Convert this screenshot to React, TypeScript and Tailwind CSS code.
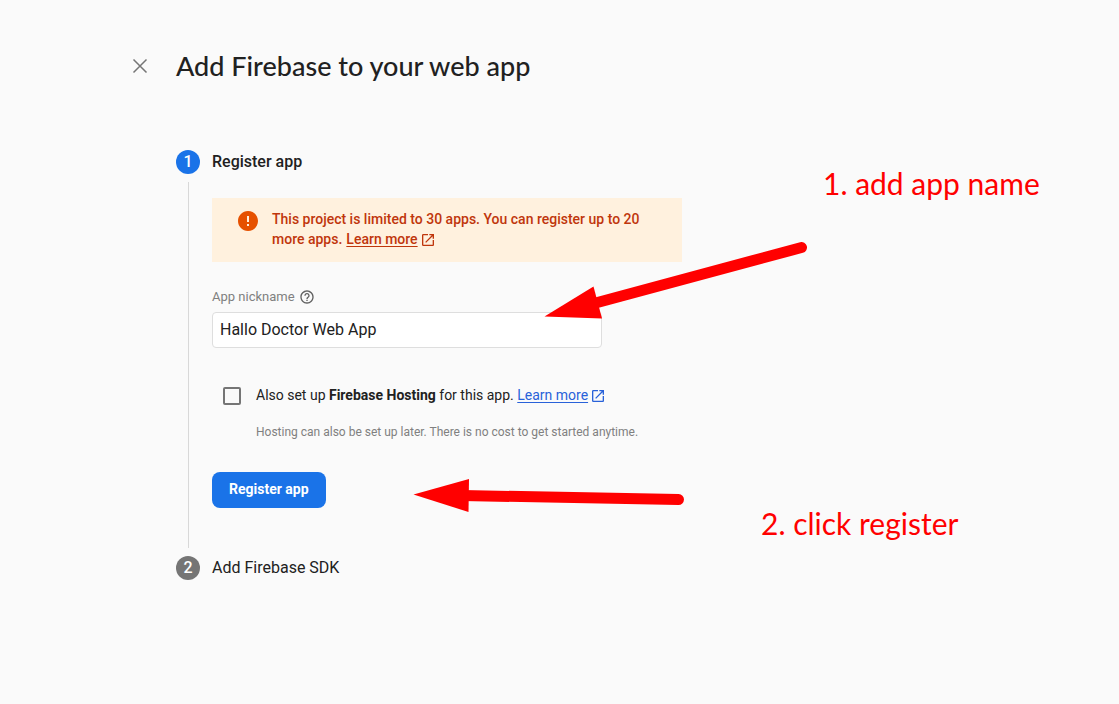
import { useState } from "react";
import type { ReactNode } from "react";

function OpenInNew() {
  return (
    <svg viewBox="0 0 24 24" aria-hidden="true" className="ml-0.5 inline-block size-4 align-[-4px]" fill="currentColor">
      <path d="M19 19H5V5h7V3H5a2 2 0 0 0-2 2v14a2 2 0 0 0 2 2h14c1.1 0 2-.9 2-2v-7h-2v7zM14 3v2h3.59l-9.83 9.83 1.41 1.41L19 6.41V10h2V3h-7z" />
    </svg>
  );
}

function LearnMore({ className }: { className: string }) {
  return (
    <a href="#learn-more" className={className}>
      <span className="underline underline-offset-2">Learn more</span>
      <OpenInNew />
    </a>
  );
}

function StepBadge({ value, className }: { value: number; className: string }) {
  return (
    <span className={`flex size-6 shrink-0 items-center justify-center rounded-full text-base font-medium text-white ${className}`}>
      {value}
    </span>
  );
}

function Notice({ children }: { children: ReactNode }) {
  return (
    <div role="status" className="flex max-w-[470px] gap-3 bg-[#fff1de] px-6 pt-[11px] pb-[13px] text-sm leading-5 font-medium text-[#bf360c]">
      <svg viewBox="0 0 24 24" aria-hidden="true" className="size-6 shrink-0" fill="#e65100">
        <path d="M12 2C6.48 2 2 6.48 2 12s4.48 10 10 10 10-4.48 10-10S17.52 2 12 2zm1 15h-2v-2h2v2zm0-4h-2V7h2v6z" />
      </svg>
      <div>{children}</div>
    </div>
  );
}

function Annotations() {
  return (
    <div className="pointer-events-none absolute top-0 left-0 h-[704px] w-[1119px] font-[Lato,sans-serif] text-[30px] leading-9 text-[#ff0000]">
      <svg viewBox="0 0 1119 704" className="size-full" aria-hidden="true" fill="#ff0000" stroke="#ff0000">
        <path d="M590 304.500 801.500 247.500" strokeWidth="11" strokeLinecap="round" />
        <path d="M544.500 316.500 593.500 286.500 602 318.500Z" stroke="none" />
        <path d="M462 495.500 678.500 499.500" strokeWidth="11" strokeLinecap="round" />
        <path d="M413.500 494.500 469 479 468.500 512Z" stroke="none" />
      </svg>
      <p className="absolute top-[165px] left-[823px] whitespace-nowrap">1. add app name</p>
      <p className="absolute top-[505px] left-[761px] whitespace-nowrap">2. click register</p>
    </div>
  );
}

export default function App() {
  const [nickname, setNickname] = useState("Hallo Doctor Web App");
  const [hosting, setHosting] = useState(false);

  return (
    <main className="relative min-h-screen bg-[#fafafa] px-32 pt-12 font-[Roboto,sans-serif] text-[#212121]">
      <header className="flex items-center gap-6">
        <button type="button" aria-label="Close" className="flex size-6 items-center justify-center">
          <svg viewBox="0 0 24 24" className="size-6" fill="none" stroke="#757575" strokeWidth="1.500">
            <path d="M5.500 5.500 18.500 18.500M18.500 5.500 5.500 18.500" />
          </svg>
        </button>
        <h1 className="font-[Lato,sans-serif] text-[27px] leading-9 font-medium">Add Firebase to your web app</h1>
      </header>

      <ol className="mt-16 pt-0.5 pl-12">
        <li className="flex gap-3">
          <div className="flex flex-col items-center gap-2 pb-2">
            <StepBadge value={1} className="bg-[#1a73e8]" />
            <div className="w-px grow bg-[#d8d8d8]" />
          </div>
          <div className="grow pb-12">
            <h2 className="text-base leading-6 font-medium">Register app</h2>
            <form className="mt-6" onSubmit={(e) => e.preventDefault()}>
              <Notice>
                <p>This project is limited to 30 apps. You can register up to 20</p>
                <p className="flex flex-wrap gap-x-1">
                  <span>more apps.</span>
                  <LearnMore className="whitespace-nowrap" />
                </p>
              </Notice>

              <div className="mt-[23px] flex items-center gap-1 text-[13px] leading-6 text-[#808080]">
                <label htmlFor="nickname">App nickname</label>
                <svg viewBox="0 0 24 24" aria-hidden="true" className="size-4" fill="#616161">
                  <path d="M11 18h2v-2h-2v2zm1-16C6.480 2 2 6.480 2 12s4.480 10 10 10 10-4.480 10-10S17.520 2 12 2zm0 18c-4.410 0-8-3.590-8-8s3.590-8 8-8 8 3.590 8 8-3.590 8-8 8zm0-14c-2.210 0-4 1.790-4 4h2c0-1.100.9-2 2-2s2 .9 2 2c0 2-3 1.750-3 5h2c0-2.250 3-2.500 3-5 0-2.210-1.790-4-4-4z" />
                </svg>
              </div>
              <input
                id="nickname"
                type="text"
                value={nickname}
                onChange={(e) => setNickname(e.target.value)}
                className="mt-[3px] block h-9 w-full max-w-[390px] rounded border border-[#dedede] bg-white px-[7px] pb-0.5 text-base outline-none focus:border-[#1a73e8]"
              />

              <div className="mt-[35px] flex items-start gap-[15px] pl-[11px]">
                <input
                  id="hosting"
                  type="checkbox"
                  checked={hosting}
                  onChange={(e) => setHosting(e.target.checked)}
                  className="mt-1 size-[18px] shrink-0 appearance-none rounded-xs border-2 border-[#757575] checked:bg-[#1a73e8]"
                />
                <div>
                  <p className="text-sm leading-6">
                    <label htmlFor="hosting">
                      Also set up <b className="font-bold">Firebase Hosting</b> for this app.
                    </label>{" "}
                    <LearnMore className="text-[#2962d9]" />
                  </p>
                  <p className="mt-[13px] text-xs leading-6 text-[#808080]">
                    Hosting can also be set up later. There is no cost to get started anytime.
                  </p>
                </div>
              </div>

              <button type="submit" className="mt-7 h-9 rounded-lg bg-[#1a73e8] px-[17px] pb-0.5 text-sm font-bold text-white">
                Register app
              </button>
            </form>
          </div>
        </li>
        <li className="flex gap-3">
          <StepBadge value={2} className="bg-[#757575]" />
          <h2 className="text-base leading-6">Add Firebase SDK</h2>
        </li>
      </ol>
      <Annotations />
    </main>
  );
}
